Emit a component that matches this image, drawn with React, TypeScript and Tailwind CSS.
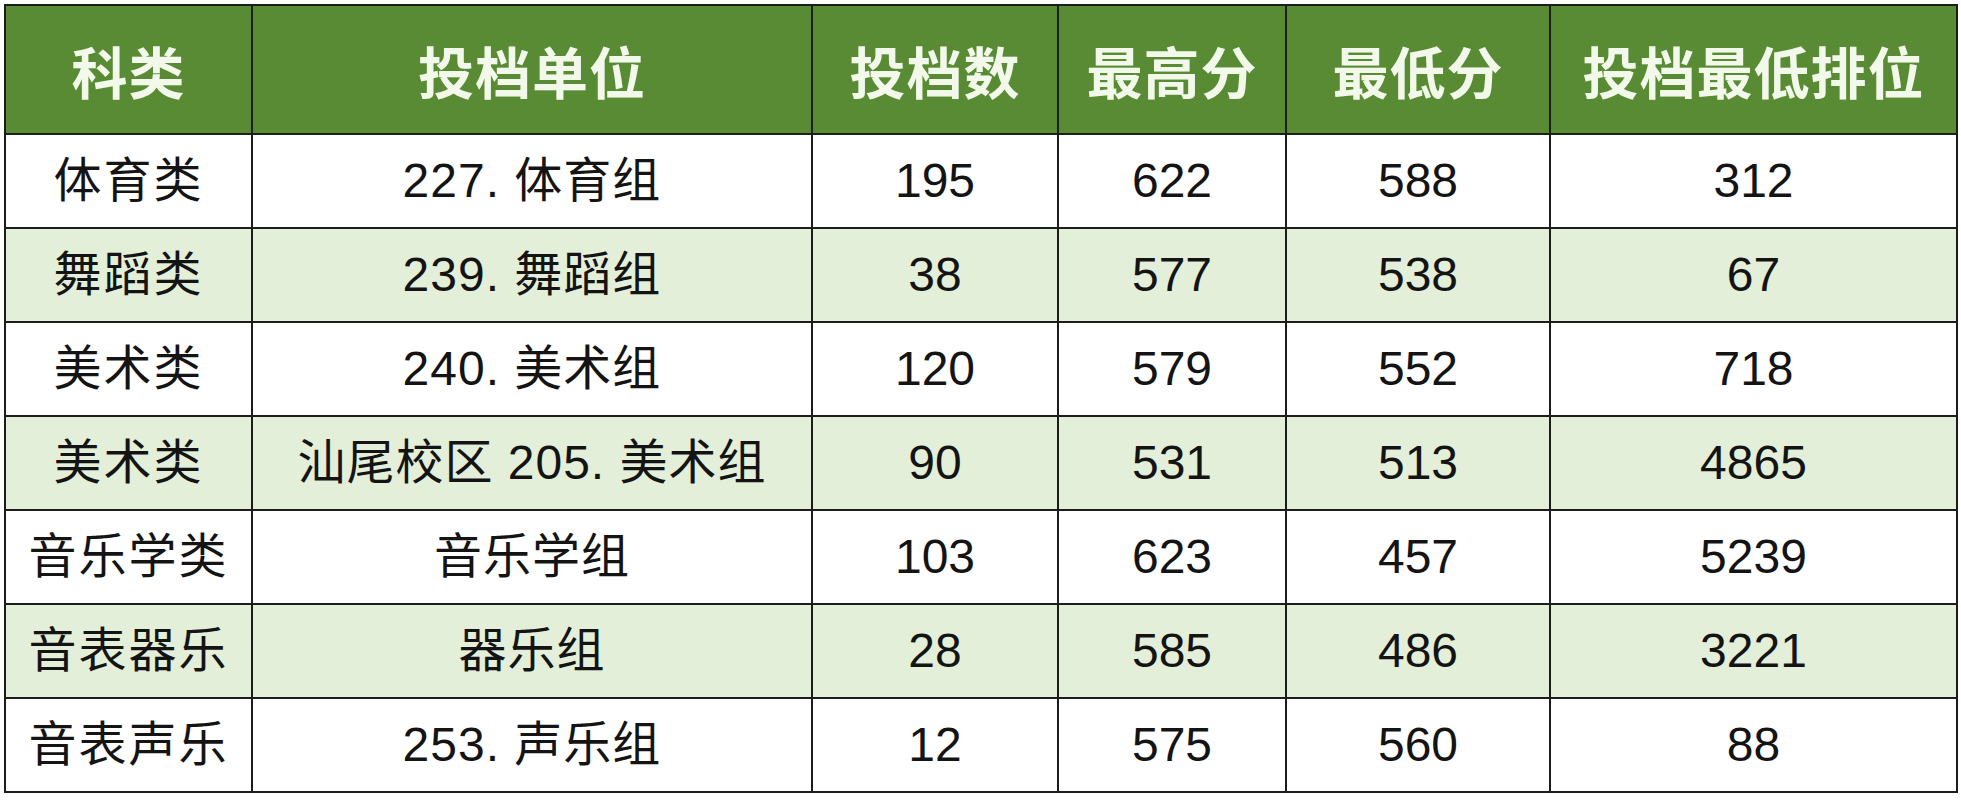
type Row = {
  category: string;
  unit: string;
  count: string;
  max: string;
  min: string;
  rank: string;
};

const rows: Row[] = [
  { category: "体育类", unit: "227. 体育组", count: "195", max: "622", min: "588", rank: "312" },
  { category: "舞蹈类", unit: "239. 舞蹈组", count: "38", max: "577", min: "538", rank: "67" },
  { category: "美术类", unit: "240. 美术组", count: "120", max: "579", min: "552", rank: "718" },
  { category: "美术类", unit: "汕尾校区 205. 美术组", count: "90", max: "531", min: "513", rank: "4865" },
  { category: "音乐学类", unit: "音乐学组", count: "103", max: "623", min: "457", rank: "5239" },
  { category: "音表器乐", unit: "器乐组", count: "28", max: "585", min: "486", rank: "3221" },
  { category: "音表声乐", unit: "253. 声乐组", count: "12", max: "575", min: "560", rank: "88" },
];

const headers = ["科类", "投档单位", "投档数", "最高分", "最低分", "投档最低排位"];

const gridClassName = "grid grid-cols-[247px_560px_246px_228px_264px_407px]";

const headCell =
  "flex h-[129px] items-center justify-center border-r-2 border-b-2 border-[#1c1f1a] bg-[#598b34] text-[56px] font-bold tracking-[1px] text-[#f2f9ea]";

const bodyCell =
  "flex h-[94px] items-center justify-center border-r-2 border-b-2 border-[#1c1c1c] text-[48px] text-[#141414]";

export default function App() {
  return (
    <div className="min-h-screen bg-white pl-[4px] pt-[4px] font-['Liberation_Sans_Narrow','Liberation_Sans','Noto_Sans_CJK_SC',sans-serif]">
      <div className="w-fit border-l-2 border-t-2 border-[#1c1c1c]">
        <div className={gridClassName}>
          {headers.map((h) => (
            <div key={h} className={`${headCell} font-['Noto_Sans_CJK_SC',sans-serif]`}>
              {h}
            </div>
          ))}
        </div>

        {rows.map((row, i) => (
          <div
            key={i}
            className={`${gridClassName} ${i % 2 === 1 ? "bg-[#e3efd9]" : "bg-white"}`}
          >
            <div className={`${bodyCell} tracking-[2px]`}>{row.category}</div>
            <div className={`${bodyCell} tracking-[1px]`}>{row.unit}</div>
            <div className={bodyCell}>{row.count}</div>
            <div className={bodyCell}>{row.max}</div>
            <div className={bodyCell}>{row.min}</div>
            <div className={bodyCell}>{row.rank}</div>
          </div>
        ))}
      </div>
    </div>
  );
}
